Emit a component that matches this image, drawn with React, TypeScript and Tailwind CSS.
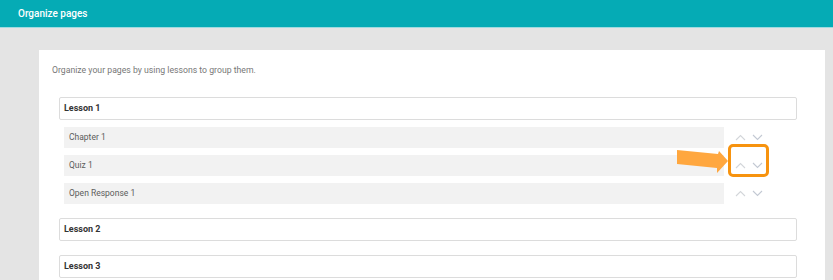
import React from "react";

const lessons = [
  { title: "Lesson 1", pages: ["Chapter 1", "Quiz 1", "Open Response 1"] },
  { title: "Lesson 2", pages: [] },
  { title: "Lesson 3", pages: [] },
];

const Chevron = ({ up }: { up?: boolean }) => (
  <svg width="11" height="7" viewBox="0 0 11 7" fill="none">
    <path
      d={up ? "M1 6L5.5 1.5L10 6" : "M1 1L5.5 5.5L10 1"}
      stroke={up ? "#d3d6da" : "#c3c9d3"}
      strokeWidth="1.1"
    />
  </svg>
);

export default function App() {
  return (
    <div className="relative w-[833px] h-[280px] overflow-hidden bg-[#e4e4e4] font-['Roboto',sans-serif]">
      {/* Top bar */}
      <div className="h-[28px] bg-[#05abb5] flex items-center pl-[18px] border-b border-[#9fdbe0]">
        <span className="text-white text-[10px] font-medium">Organize pages</span>
      </div>

      <div className="ml-[39px] mt-[22px] w-[786px] bg-white pl-[13px] pt-[14px] pb-4">
        <p className="text-[8.7px] leading-[12px] text-[#777]">
          Organize your pages by using lessons to group them.
        </p>

        <div className="ml-[7px] mt-[21px] flex flex-col gap-[14px]">
          {lessons.map((lesson) => (
            <div key={lesson.title}>
              <div className="w-[738px] h-[23px] border border-[#dcdcdc] rounded-[2px] flex items-center pl-[4px]">
                <span className="text-[9px] font-bold text-[#333]">{lesson.title}</span>
              </div>
              {lesson.pages.length > 0 && (
                <div className="mt-[7px] flex flex-col gap-[7px] pl-[5px]">
                  {lesson.pages.map((page) => (
                    <div key={page} className="flex items-center">
                      <div className="w-[660px] h-[21px] bg-[#f2f2f2] flex items-center pl-[5px]">
                        <span className="text-[8.5px] text-[#5c5c5c]">{page}</span>
                      </div>
                      <div className="flex items-center gap-[6px] pl-[11px]">
                        <Chevron up />
                        <Chevron />
                      </div>
                    </div>
                  ))}
                </div>
              )}
            </div>
          ))}
        </div>
      </div>

      {/* Callout highlight */}
      <div className="absolute left-[728px] top-[144px] w-[41px] h-[33px] border-[3px] border-[#f7930f] rounded-[5px]" />
      <svg className="absolute left-[676px] top-[148px]" width="54" height="28" viewBox="0 0 54 28">
        <polygon points="1,2 42,6 43,3 52,13 41,25 41,20 1,16" fill="#ffa73f" />
      </svg>
    </div>
  );
}
